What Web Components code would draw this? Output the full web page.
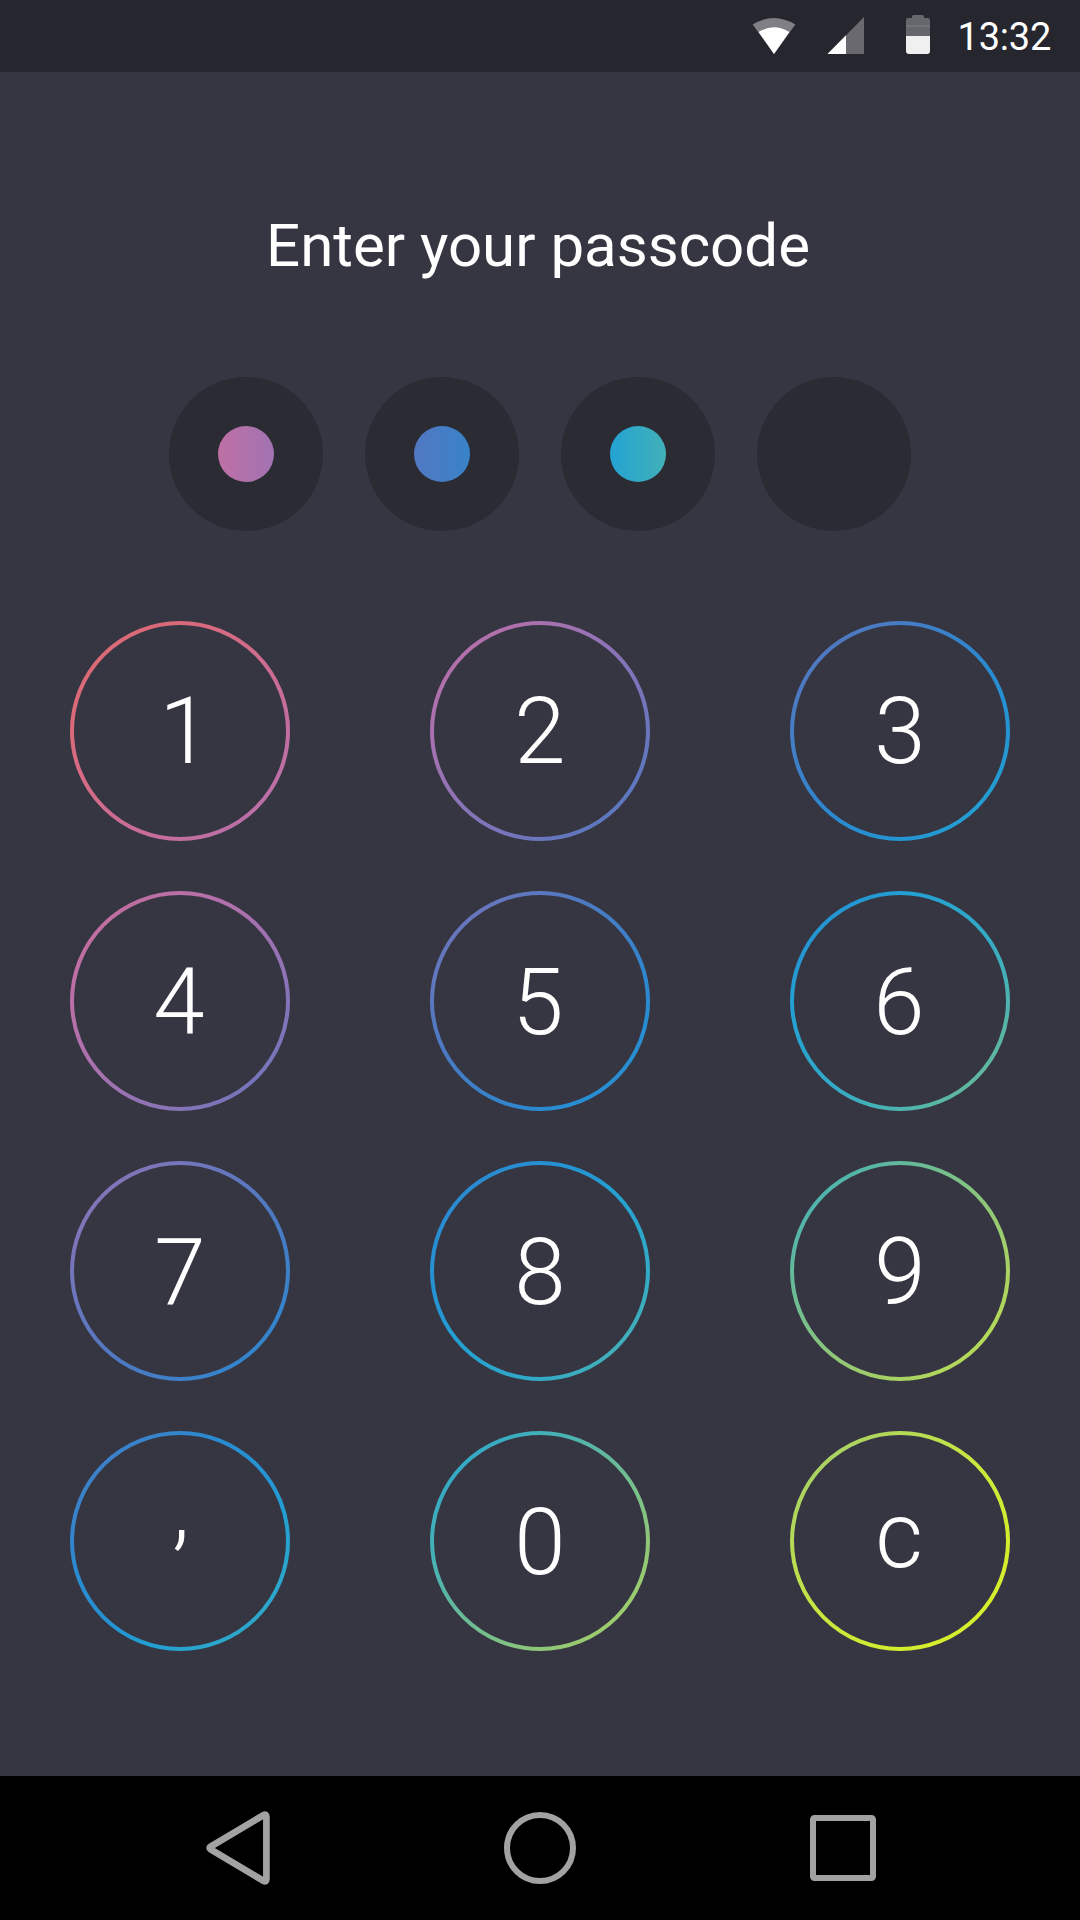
<!DOCTYPE html>
<html lang="en">
<head>
<meta charset="utf-8">
<title>Enter your passcode</title>
<style>
  html, body { margin: 0; height: 100%; background: #363542; }
  body { font-family: Roboto, sans-serif; color: #fff; }
</style>
</head>
<body>
<lock-screen></lock-screen>
<script>
// One diagonal rainbow runs over the whole keypad; each ring shows its own slice.
const STOPS = [
  [0, '#db6a77'], [45, '#da6a7a'], [155, '#d06c8d'], [265, '#c26ea0'], [315, '#ba6fa7'], [405, '#aa71af'],
  [535, '#8474b8'], [625, '#6976bd'], [720, '#4f79c1'], [805, '#3d80c8'], [895, '#2a8ad0'],
  [985, '#2495d3'], [1050, '#23a1d2'], [1165, '#33aac6'], [1255, '#4db4af'], [1300, '#60b89e'],
  [1435, '#8fc778'], [1525, '#a9d263'], [1575, '#b4da57'], [1690, '#c9e83d'], [1780, '#d2ed2f'], [1840, '#d6ee2c']
];

const make = (host, html) => {
  host.attachShadow({ mode: 'open' }).innerHTML = html;
};

customElements.define('status-bar', class extends HTMLElement {
  connectedCallback() {
    make(this, `<style>
      :host { display: flex; justify-content: flex-end; align-items: center; height: 72px; box-sizing: border-box;
        padding-right: 29px; background: #26262f; }
      svg { display: block; flex: none; }
      time { flex: 0 0 121px; text-align: right; font-size: 38px; line-height: 74px; height: 72px; letter-spacing: -0.25px; }
    </style>
    <svg width="44" height="72" viewBox="752 0 44 72">
      <path d="M752.7 24.5Q774 11.5 795.3 24.5L774 54Z" fill="#807f86"/>
      <path d="M758.6 32Q774 22.5 789.4 32L774 54Z" fill="#fff"/>
    </svg>
    <svg width="110" height="72" viewBox="796 0 110 72">
      <path d="M827.5 54L864 17V54Z" fill="#69696f"/>
      <path d="M827.5 54L846 35.2V54Z" fill="#fff"/>
    </svg>
    <svg width="24" height="72" viewBox="906 0 24 72">
      <path d="M906 36V20a2 2 0 0 1 2-2h4v-1.500a1.500 1.500 0 0 1 1.500-1.500h9a1.500 1.500 0 0 1 1.500 1.500V18h4a2 2 0 0 1 2 2V36Z" fill="#66676c"/>
      <path d="M906 25h24v2h-24z" fill="#727378"/>
      <path d="M906 36h24V51a3 3 0 0 1-3 3H909a3 3 0 0 1-3-3Z" fill="#f0f0f1"/>
    </svg>
    <time>13:32</time>`);
  }
});

customElements.define('pass-dot', class extends HTMLElement {
  connectedCallback() {
    make(this, `<style>
      :host { display: flex; align-items: center; justify-content: center; width: 154px; height: 154px;
        border-radius: 50%; background: #2b2b34; }
      i { width: 56px; height: 56px; border-radius: 50%; background: linear-gradient(90deg, var(--from, transparent), var(--to, transparent)); }
    </style><i></i>`);
  }
});

customElements.define('pin-key', class extends HTMLElement {
  connectedCallback() {
    const n = [...this.parentNode.children].indexOf(this);
    const dx = (n % 3) * 360, dy = Math.floor(n / 3) * 270;
    // Local x+y = 65 on the first ring is the start of the rainbow; it spans 1840.
    const a = (65 - dx - dy) / 2, b = a + 920;
    make(this, `<style>
      :host { display: grid; width: 220px; height: 220px; }
      svg, span { grid-area: 1 / 1; }
      span { place-self: center; font-size: 92.5px; line-height: 93px; font-weight: 300; transform: translate(var(--nudge-x, 0px), var(--nudge, 1px)); }
    </style>
    <svg width="220" height="220" viewBox="0 0 220 220">
      <defs><linearGradient id="g" gradientUnits="userSpaceOnUse" x1="${a}" y1="${a}" x2="${b}" y2="${b}">
        ${STOPS.map(([p, c]) => `<stop offset="${p / 1840}" stop-color="${c}"/>`).join('')}
      </linearGradient></defs>
      <circle cx="110" cy="110" r="108" fill="none" stroke="url(#g)" stroke-width="4"/>
    </svg>
    <span><slot></slot></span>`);
  }
});

customElements.define('nav-bar', class extends HTMLElement {
  connectedCallback() {
    make(this, `<style>
      :host { display: flex; align-items: center; justify-content: space-between; height: 144px; box-sizing: border-box;
        padding: 0 204px; background: #000; }
      svg { display: block; }
    </style>
    <svg width="66" height="144" viewBox="204 0 66 144">
      <path d="M266.400 41V103Q266.400 106.500 263.500 104.900L210.600 73.300Q208.500 72 210.600 70.700L263.500 39.100Q266.400 37.500 266.400 41Z" fill="none" stroke="#a2a2a2" stroke-width="6.700" stroke-linejoin="round"/>
    </svg>
    <svg width="72" height="144" viewBox="504 0 72 144"><circle cx="540" cy="72" r="33" fill="none" stroke="#a2a2a2" stroke-width="6"/></svg>
    <svg width="66" height="144" viewBox="810 0 66 144"><rect x="813" y="42" width="60" height="60" rx="1.500" fill="none" stroke="#a2a2a2" stroke-width="6"/></svg>`);
  }
});

customElements.define('lock-screen', class extends HTMLElement {
  connectedCallback() {
    make(this, `<style>
      :host { display: flex; flex-direction: column; height: 1920px; width: 1080px; background: #363542; }
      main { flex: 1; display: flex; flex-direction: column; align-items: center; }
      h1 { margin: 139px 4px 0 0; font-size: 60px; line-height: 70px; font-weight: 400; white-space: nowrap; }
      .dots { display: flex; gap: 42px; margin-top: 96px; }
      .keys { display: grid; grid-template-columns: repeat(3, 220px); gap: 50px 140px; margin-top: 90px; }
    </style>
    <status-bar></status-bar>
    <main>
      <h1>Enter your passcode</h1>
      <div class="dots">
        <pass-dot style="--from:#be70a4;--to:#a173b2"></pass-dot>
        <pass-dot style="--from:#5278c1;--to:#3883c9"></pass-dot>
        <pass-dot style="--from:#24a3d3;--to:#41b1b8"></pass-dot>
        <pass-dot></pass-dot>
      </div>
      <div class="keys">
        <pin-key style="--nudge:0px;--nudge-x:5px">1</pin-key><pin-key style="--nudge:0px">2</pin-key><pin-key style="--nudge:0px">3</pin-key>
        <pin-key style="--nudge-x:-1px">4</pin-key><pin-key style="--nudge-x:-2px">5</pin-key><pin-key style="--nudge-x:-1px">6</pin-key>
        <pin-key>7</pin-key><pin-key>8</pin-key><pin-key>9</pin-key>
        <pin-key style="--nudge:-34px;--nudge-x:1px">,</pin-key><pin-key>0</pin-key><pin-key style="--nudge:-6px;--nudge-x:-1px">c</pin-key>
      </div>
    </main>
    <nav-bar></nav-bar>`);
  }
});
</script>
</body>
</html>
